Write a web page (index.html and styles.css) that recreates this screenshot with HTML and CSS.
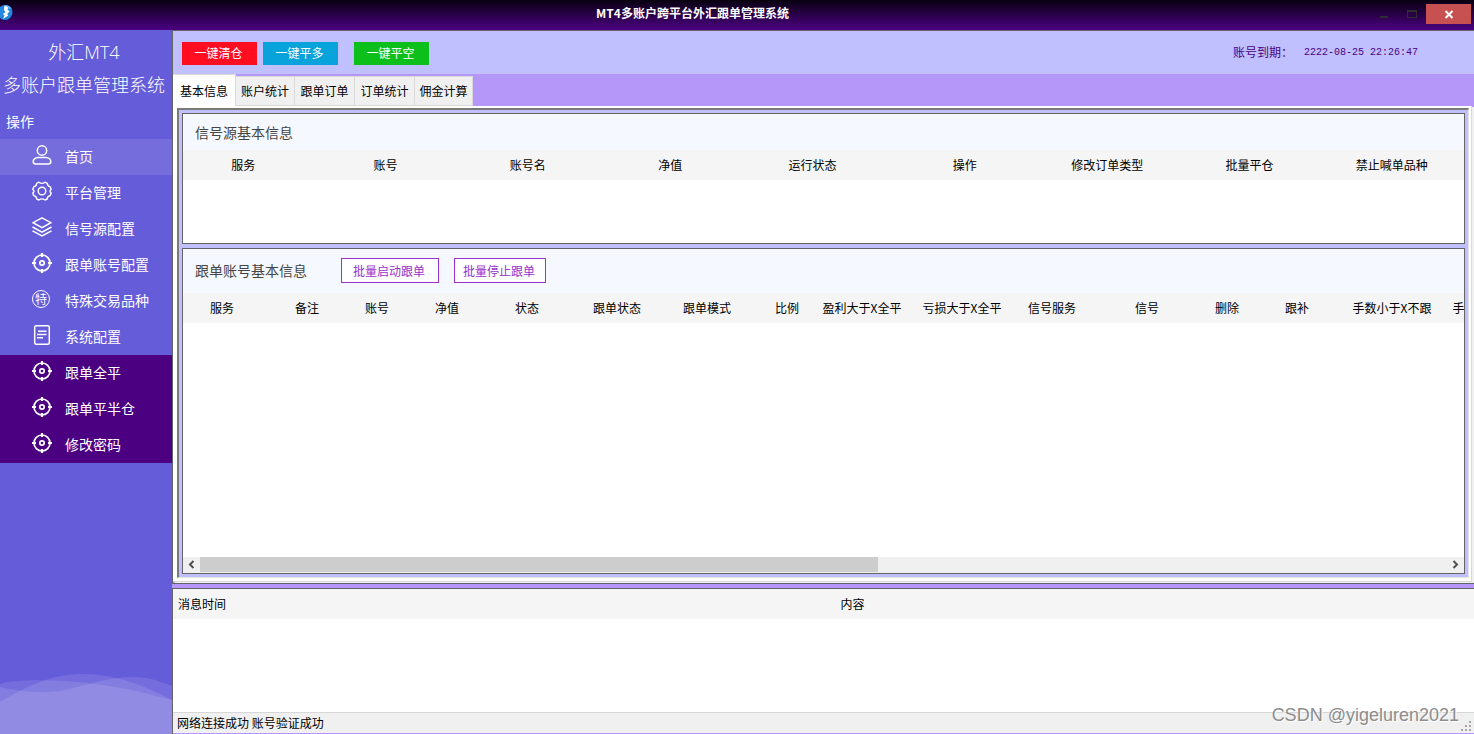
FILE: index.html
```html
<!DOCTYPE html>
<html lang="zh-CN">
<head>
<meta charset="utf-8">
<title>MT4多账户跨平台外汇跟单管理系统</title>
<link rel="stylesheet" href="styles.css">
</head>
<body>
<svg class="defs" aria-hidden="true">
  <symbol id="target" viewBox="0 0 20 20"><g fill="none" stroke="currentColor"><circle cx="10" cy="10" r="8" stroke-width="1.7"/><circle cx="10" cy="10" r="2.2" stroke-width="1.7"/><path d="M10 0v4M10 16v4M0 10h4M16 10h4" stroke-width="2.2"/></g></symbol>
</svg>
<div class="window">
  <header class="titlebar">
    <svg class="logo" viewBox="0 0 15 16" aria-hidden="true"><circle cx="5" cy="8.500" r="7.500" fill="#2386e0"/><path d="M5 1a8 8 0 0 1 7 4L4 4z" fill="#58b4f2"/><path d="M4.500 1.500L8 3.500 7.500 6l2.200 1-2.500 3 1 1.500L3 15l1.500-3.500L3 10l2.500-2L4 6z" fill="#fff"/></svg>
    <h1 class="window-title">MT4多账户跨平台外汇跟单管理系统</h1>
    <button class="win-btn" aria-label="最小化"><svg viewBox="0 0 28 20"><path d="M10 12h8v2h-8z" fill="#2e2e2e"/></svg></button>
    <button class="win-btn" aria-label="最大化"><svg viewBox="0 0 28 20"><path d="M9 6h10v8H9zM10 8v5h8V8z" fill="#2e2e2e" fill-rule="evenodd"/></svg></button>
    <button class="win-btn close" aria-label="关闭"><svg viewBox="0 0 45 20"><path d="M19.500 7l7 7M26.500 7l-7 7" stroke="#fff" stroke-width="2"/></svg></button>
  </header>
  <div class="body">
    <aside class="sidebar">
      <p class="brand">外汇MT4</p>
      <p class="brand">多账户跟单管理系统</p>
      <h2 class="menu-title">操作</h2>
      <nav class="menu">
        <a class="item active" href="#home"><svg class="icon" viewBox="0 0 20 20"><g fill="none" stroke="currentColor" stroke-width="1.500"><circle cx="10" cy="5.500" r="4.700"/><path d="M6 12.500h8c3 0 4.800 2.200 4.800 4.300 0 1.500-1 2.200-2.500 2.200H3.700c-1.500 0-2.500-.7-2.500-2.200 0-2.100 1.800-4.300 4.800-4.300z"/></g></svg>首页</a>
        <a class="item" href="#platform"><svg class="icon" viewBox="0 0 20 20"><g fill="none" stroke="currentColor" stroke-width="1.400"><circle cx="10" cy="10" r="3.800"/><path d="M7 1.200q3 2.400 6 0l2.300 1.100q.2 3.200 3 3.600l.9 2.600q-2.400 1.500 0 3.500l-1 2.600q-3 .5-3 3.400L13 19q-3-2.200-6 0l-2.300-1q0-2.900-3-3.400L.8 12q2.400-2 0-3.500l.9-2.600q2.800-.4 3-3.600z" stroke-linejoin="round"/></g></svg>平台管理</a>
        <a class="item" href="#source"><svg class="icon" viewBox="0 0 20 20"><g fill="none" stroke="currentColor" stroke-width="1.500"><path d="M10 .9l9 4.800-9 5-9-5zM.5 10l9.500 5.200 9.500-5.200M.5 13.800L10 19l9.500-5.200"/></g></svg>信号源配置</a>
        <a class="item" href="#account"><svg class="icon"><use href="#target"/></svg>跟单账号配置</a>
        <a class="item" href="#symbols"><span class="icon badge">特</span>特殊交易品种</a>
        <a class="item" href="#system"><svg class="icon" viewBox="0 0 20 20"><g fill="none" stroke="currentColor" stroke-width="1.500"><rect x="2.700" y=".8" width="14.600" height="18.400" rx="1.500"/><path d="M6 6.200h8.500M5 9.500h9.500M5 12.800h6"/></g></svg>系统配置</a>
        <a class="item dark" href="#closeall"><svg class="icon"><use href="#target"/></svg>跟单全平</a>
        <a class="item dark" href="#closehalf"><svg class="icon"><use href="#target"/></svg>跟单平半仓</a>
        <a class="item dark" href="#password"><svg class="icon"><use href="#target"/></svg>修改密码</a>
      </nav>
      <svg class="waves" viewBox="0 0 172 64" preserveAspectRatio="none" aria-hidden="true"><g fill="#fff" fill-opacity=".11"><path d="M0 32C30 14 55 4 83 4 115 4 145 16 172 30V64H0z"/><path d="M0 14C15 9 60 9 95 14 130 18 155 26 172 30V64H0z"/><path d="M0 17C20 22 45 24 65 20 90 14 110 7 132 7 150 7 162 12 172 16V64H0z"/></g></svg>
    </aside>
    <main class="main">
      <section class="workspace">
        <div class="toolbar">
          <button class="action red">一键清仓</button>
          <button class="action blue">一键平多</button>
          <button class="action green">一键平空</button>
          <p class="expiry"><span>账号到期：</span><time datetime="2222-08-25T22:26:47">2222-08-25 22:26:47</time></p>
        </div>
        <div class="tabs" role="tablist">
          <button class="tab selected" role="tab" aria-selected="true">基本信息</button>
          <button class="tab" role="tab">账户统计</button>
          <button class="tab" role="tab">跟单订单</button>
          <button class="tab" role="tab">订单统计</button>
          <button class="tab" role="tab">佣金计算</button>
        </div>
        <div class="page">
          <div class="frame">
            <section class="panel source">
              <div class="panel-head"><h2>信号源基本信息</h2></div>
              <table class="grid">
                <thead><tr><th class="sort">服务</th><th class="sort">账号</th><th class="sort">账号名</th><th class="sort">净值</th><th class="sort">运行状态</th><th>操作</th><th>修改订单类型</th><th>批量平仓</th><th>禁止喊单品种</th></tr></thead>
              </table>
            </section>
            <section class="panel follow">
              <div class="panel-head"><h2>跟单账号基本信息</h2><button class="outline start">批量启动跟单</button><button class="outline">批量停止跟单</button></div>
              <div class="clip">
                <table class="grid wide">
                  <colgroup><col class="c100"><col class="c70"><col class="c70"><col class="c70"><col class="c90"><col class="c90"><col class="c90"><col class="c50"><col class="c100"><col class="c100"><col class="c80"><col class="c110"><col class="c50"><col class="c90"><col class="c100"><col class="c100"></colgroup>
                  <thead><tr><th class="sort">服务</th><th class="sort">备注</th><th class="sort">账号</th><th class="sort">净值</th><th class="sort">状态</th><th class="sort">跟单状态</th><th class="sort">跟单模式</th><th>比例</th><th>盈利大于X全平</th><th>亏损大于X全平</th><th>信号服务</th><th>信号</th><th>删除</th><th>跟补</th><th>手数小于X不跟</th><th>手数大于X不跟</th></tr></thead>
                </table>
              </div>
              <div class="scrollbar">
                <button class="arrow" aria-label="向左滚动"><svg viewBox="0 0 17 16"><path d="M10.500 4L7 7.500l3.500 3.500" fill="none" stroke="#505050" stroke-width="2"/></svg></button>
                <div class="track"><div class="thumb"></div></div>
                <button class="arrow" aria-label="向右滚动"><svg viewBox="0 0 17 16"><path d="M6.500 4L10 7.500 6.500 11" fill="none" stroke="#505050" stroke-width="2"/></svg></button>
              </div>
            </section>
          </div>
        </div>
      </section>
      <section class="messages">
        <table class="grid log"><colgroup><col class="time"><col></colgroup><thead><tr><th>消息时间</th><th>内容</th></tr></thead></table>
        <footer class="status"><span>网络连接成功 账号验证成功</span><svg class="grip" viewBox="0 0 12 12" aria-hidden="true"><path d="M9 1h2v2H9zM5 5h2v2H5zM9 5h2v2H9zM1 9h2v2H1zM5 9h2v2H5zM9 9h2v2H9z" fill="#a8a8a8"/></svg></footer>
      </section>
    </main>
  </div>
  <span class="watermark">CSDN @yigeluren2021</span>
</div>
</body>
</html>
```

FILE: styles.css
```css
* { box-sizing: border-box; }
body, h1, h2, p { margin: 0; }
body { font: 12px/18px "Noto Sans CJK SC", sans-serif; color: #000; }
button { margin: 0; padding: 0; border: 0; font: inherit; color: inherit; background: none; }
svg { display: block; }
.defs { position: absolute; width: 0; height: 0; }
.window { display: flex; flex-direction: column; height: 100vh; position: relative; overflow: hidden; }

.titlebar { display: flex; align-items: flex-start; height: 30px; flex: none; padding: 4px 3px 0 0; background: linear-gradient(#080010, #4b0082); }
.logo { width: 15px; height: 16px; flex: none; }
.window-title { flex: 1; text-align: center; font-size: 12px; line-height: 18px; font-weight: 700; color: #fff; }
.win-btn { width: 28px; height: 20px; }
.close { width: 45px; background: #c75050; }

.body { display: flex; flex: 1; min-height: 0; }
.sidebar { display: flex; flex-direction: column; width: 172px; flex: none; padding-top: 6px; background: #655cd9; color: #fff; }
.brand { width: 162px; margin-left: 3px; text-align: center; white-space: nowrap; font-family: "Open Sans", "Noto Sans CJK SC", sans-serif; font-size: 18px; line-height: 33px; font-weight: 300; }
.menu-title { padding: 2px 6px 1px; font-size: 14px; line-height: 34px; font-weight: 400; }
.menu { display: flex; flex-direction: column; }
.item { display: flex; align-items: center; gap: 13px; height: 36px; padding: 0 0 2px 32px; font-size: 14px; color: #fff; text-decoration: none; }
.item.active { background: #756ddc; }
.item.dark { background: #4b0082; }
.icon { width: 20px; height: 20px; flex: none; margin-bottom: 2px; }
.badge { width: 18px; height: 18px; margin: 0 2px 2px 0; border: 1px solid #fff; border-radius: 50%; text-align: center; font-size: 12px; line-height: 15px; }
.waves { width: 100%; height: 64px; margin-top: auto; }

.main { display: flex; flex-direction: column; flex: 1; min-width: 0; background: #b497f9; }
.workspace { display: flex; flex-direction: column; flex: 1; min-height: 0; border: 1px solid #646464; border-right: 0; }
.toolbar { display: flex; align-items: center; height: 43px; flex: none; padding: 1px 56px 0 9px; background: #c0c0ff; }
.action { width: 75px; height: 23px; margin-right: 6px; padding: 0 2px 2px 0; color: #fff; line-height: 21px; }
.red { background: #ff0d21; }
.blue { background: #09a3dc; margin-right: 16px; }
.green { background: #0dbf1b; }
.expiry { display: flex; gap: 11px; margin-left: auto; color: #4b0082; }
.expiry time { font-family: "Liberation Mono", monospace; font-size: 10px; line-height: 20px; }
.tabs { display: flex; align-items: flex-end; height: 32px; flex: none; }
.tab { width: 60px; height: 30px; border: 1px solid #d9d9d9; border-left: 0; background: #f0f0f0; line-height: 28px; white-space: nowrap; }
.tab.selected { width: 63px; height: 32px; border-bottom: 0; background: #fff; line-height: 30px; }
.tab.selected + .tab { width: 59px; }
.tab:last-child { width: 58px; }
.page { display: flex; flex: 1; min-height: 0; padding: 2px 2px 3px 4px; background: #fff; border: solid #d9d9d9; border-width: 0 1px 1px 0; margin-right: 2px; box-shadow: 2px 1px #f0f0f0; margin-bottom: 1px; }
.frame { display: flex; flex-direction: column; gap: 4px; flex: 1; min-width: 0; padding: 3px; background: #c0c0ff; border: 2px solid #7a7a7a; border-right: 1px solid #e3e3e3; border-bottom: 1px solid #e3e3e3; }
.panel { display: flex; flex-direction: column; border: 1px solid #646464; background: #fff; min-width: 0; }
.source { height: 131px; flex: none; }
.follow { flex: 1; min-height: 0; }
.panel-head { display: flex; align-items: center; height: 36px; flex: none; padding: 0 12px; background: #f5f9ff; }
.panel-head h2 { font-size: 14px; line-height: 20px; font-weight: 400; color: #444; }
.follow .panel-head { height: 44px; padding-bottom: 2px; }
.outline { height: 25px; width: 92px; border: 1px solid #9932cc; background: #fff; color: #9932cc; line-height: 23px; padding-right: 2px; }
.start { width: 98px; margin: 0 15px 0 34px; }
.grid { width: 100%; table-layout: fixed; border-collapse: collapse; }
.grid th { height: 30px; padding: 0 2px 0 0; background: #f5f5f5; font-weight: 400; line-height: 18px; text-align: center; white-space: nowrap; }
.grid th.sort { padding-right: 22px; }
.grid.log th { padding: 0; }
.clip { flex: 1; min-height: 0; overflow: hidden; }
.grid.wide { width: 1360px; }
.c50 { width: 50px; }
.c70 { width: 70px; }
.c80 { width: 80px; }
.c90 { width: 90px; }
.c100 { width: 100px; }
.c110 { width: 110px; }
.scrollbar { display: flex; height: 16px; flex: none; background: #f0f0f0; }
.arrow { width: 17px; height: 16px; flex: none; }
.track { flex: 1; }
.thumb { width: 54.4%; height: 15px; background: #cdcdcd; }

.messages { display: flex; flex-direction: column; height: 146px; flex: none; margin-top: 4px; padding-bottom: 1px; border: solid #646464; border-width: 1px 0 0 1px; background: linear-gradient(#fff, #fff) content-box, #b497f9; }
.time { width: 58px; }
.status { display: flex; align-items: center; height: 21px; margin-top: auto; padding: 0 2px 0 4px; background: #f0f0f0; border-top: 1px solid #d7d7d7; }
.grip { width: 12px; height: 12px; margin: 6px 0 0 auto; }
.watermark { position: absolute; right: 15px; bottom: 7px; font: 18px/24px "Liberation Sans", sans-serif; color: #8d8d8d; text-shadow: 1px 1px #fff; }
```
